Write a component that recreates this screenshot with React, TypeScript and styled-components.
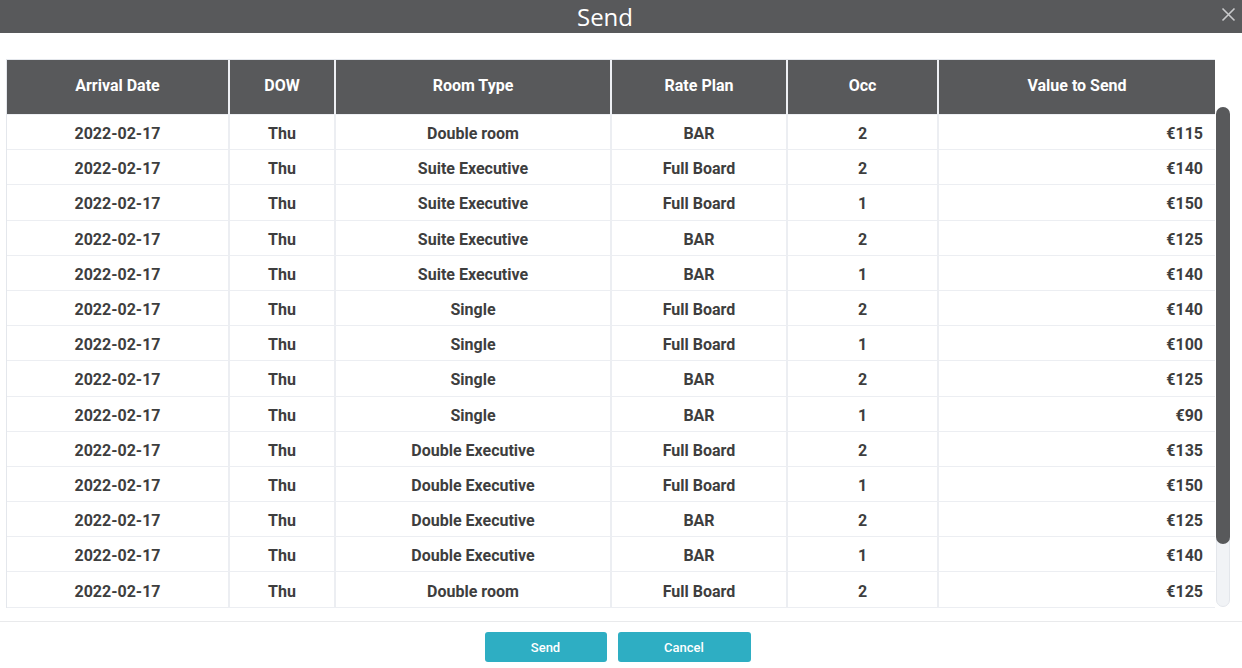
import React from "react";
import styled, { createGlobalStyle } from "styled-components";

const Global = createGlobalStyle`
  html, body { margin: 0; padding: 0; background: #fff; }
  body { width: 1242px; height: 668px; overflow: hidden; font-family: Roboto, "Liberation Sans", Arial, sans-serif; }
  * { box-sizing: border-box; }
`;

const Dialog = styled.div`
  width: 1242px;
  height: 668px;
  display: flex;
  flex-direction: column;
  background: #fff;
`;

const TitleBar = styled.div`
  height: 33px;
  background: #58595b;
  display: flex;
  align-items: center;
  justify-content: center;
  position: relative;
`;

const Title = styled.div`
  font-family: "Open Sans", "Liberation Sans", sans-serif;
  font-size: 24px;
  color: #fff;
  line-height: 33px;
  margin-left: -32px;
  margin-top: -1px;
`;

const CloseBtn = styled.button`
  position: absolute;
  right: 6px;
  top: 7px;
  width: 15px;
  height: 15px;
  padding: 0;
  border: 0;
  background: transparent;
  display: flex;
`;

const Content = styled.div`
  padding: 26px 0 0 6px;
  display: flex;
  align-items: flex-start;
`;

const TableBox = styled.div`
  width: 1209px;
  border-top: 1px solid #e4e7ec;
  border-left: 1px solid #e4e7ec;
  display: flex;
  flex-direction: column;
`;

const COLS = "223px 106px 276px 176px 151px 276px";

const HeaderRow = styled.div`
  display: grid;
  grid-template-columns: ${COLS};
  height: 55px;
  background: #58595b;
`;

const HeaderCell = styled.div<{ $last?: boolean }>`
  display: flex;
  align-items: center;
  justify-content: center;
  color: #fff;
  font-weight: 700;
  font-size: 16px;
  border-right: ${(p) => (p.$last ? "none" : "2px solid #eef0f4")};
  border-bottom: 1px solid #eef0f4;
  padding-bottom: 4px;
`;

const Body = styled.div`
  height: 493px;
  overflow: hidden;
`;

const Row = styled.div`
  display: grid;
  grid-template-columns: ${COLS};
  height: 35.2px;
`;

const Cell = styled.div<{ $align?: "center" | "right"; $last?: boolean }>`
  display: flex;
  align-items: center;
  justify-content: ${(p) => (p.$align === "right" ? "flex-end" : "center")};
  padding-right: ${(p) => (p.$align === "right" ? "12px" : "0")};
  color: #3e3e3e;
  font-weight: 700;
  font-size: 16px;
  border-bottom: 1px solid #eceef2;
  border-right: ${(p) => (p.$last ? "none" : "2px solid #eceef2")};
  padding-top: 3px;
`;

const ScrollCol = styled.div`
  width: 16px;
  padding: 48px 1px 0 1px;
`;

const Track = styled.div`
  width: 14px;
  height: 500px;
  border-radius: 7px;
  background: #f1f3f6;
  border: 1px solid #e3e6eb;
  display: flex;
`;

const Thumb = styled.div`
  width: 14px;
  height: 437px;
  margin: -1px;
  border-radius: 7px;
  background: #58595b;
`;

const Footer = styled.div`
  margin-top: 13px;
  border-top: 1px solid #e9eaec;
  padding-top: 10px;
  display: flex;
  justify-content: center;
  gap: 11px;
  padding-right: 7px;
`;

const Button = styled.button<{ $w: number }>`
  width: ${(p) => p.$w}px;
  height: 30px;
  border: 0;
  border-radius: 3px;
  background: #2eaec3;
  color: #fff;
  font-family: Roboto, "Liberation Sans", sans-serif;
  font-size: 13px;
  font-weight: 500;
  cursor: pointer;
`;

type R = [string, string, string, number, string];

const rows: R[] = [
  ["Thu", "Double room", "BAR", 2, "€115"],
  ["Thu", "Suite Executive", "Full Board", 2, "€140"],
  ["Thu", "Suite Executive", "Full Board", 1, "€150"],
  ["Thu", "Suite Executive", "BAR", 2, "€125"],
  ["Thu", "Suite Executive", "BAR", 1, "€140"],
  ["Thu", "Single", "Full Board", 2, "€140"],
  ["Thu", "Single", "Full Board", 1, "€100"],
  ["Thu", "Single", "BAR", 2, "€125"],
  ["Thu", "Single", "BAR", 1, "€90"],
  ["Thu", "Double Executive", "Full Board", 2, "€135"],
  ["Thu", "Double Executive", "Full Board", 1, "€150"],
  ["Thu", "Double Executive", "BAR", 2, "€125"],
  ["Thu", "Double Executive", "BAR", 1, "€140"],
  ["Thu", "Double room", "Full Board", 2, "€125"],
];

const headers = ["Arrival Date", "DOW", "Room Type", "Rate Plan", "Occ", "Value to Send"];

export default function App() {
  return (
    <>
      <Global />
      <Dialog>
        <TitleBar>
          <Title>Send</Title>
          <CloseBtn aria-label="close">
            <svg width="15" height="15" viewBox="0 0 15 15">
              <path d="M1.5 1.5 L13.5 13.5 M13.5 1.5 L1.5 13.5" stroke="#c9cacc" strokeWidth="1.6" />
            </svg>
          </CloseBtn>
        </TitleBar>
        <Content>
          <TableBox>
            <HeaderRow>
              {headers.map((h, i) => (
                <HeaderCell key={h} $last={i === headers.length - 1}>
                  {h}
                </HeaderCell>
              ))}
            </HeaderRow>
            <Body>
              {rows.map((r, i) => (
                <Row key={i}>
                  <Cell>2022-02-17</Cell>
                  <Cell>{r[0]}</Cell>
                  <Cell>{r[1]}</Cell>
                  <Cell>{r[2]}</Cell>
                  <Cell>{r[3]}</Cell>
                  <Cell $align="right" $last>
                    {r[4]}
                  </Cell>
                </Row>
              ))}
            </Body>
          </TableBox>
          <ScrollCol>
            <Track>
              <Thumb />
            </Track>
          </ScrollCol>
        </Content>
        <Footer>
          <Button $w={122}>Send</Button>
          <Button $w={133}>Cancel</Button>
        </Footer>
      </Dialog>
    </>
  );
}
